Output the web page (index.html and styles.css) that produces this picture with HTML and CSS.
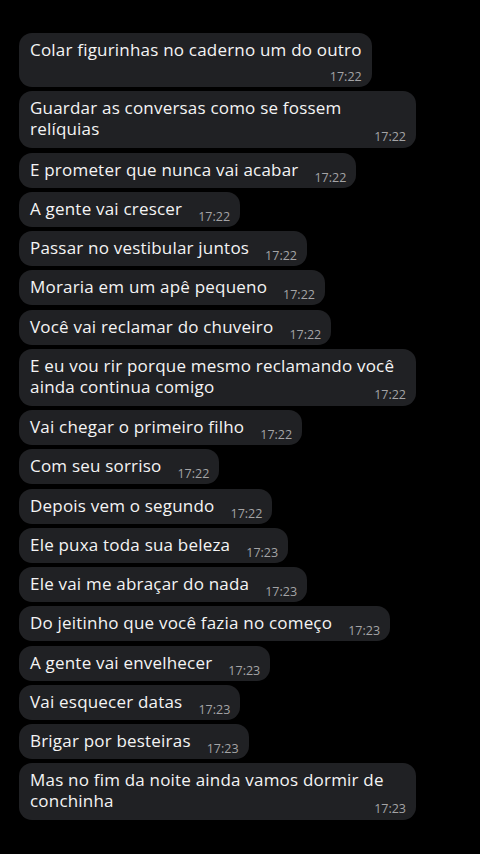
FILE: index.html
```html
<!DOCTYPE html>
<html lang="pt-BR">
<head>
  <meta charset="UTF-8">
  <meta name="viewport" content="width=device-width, initial-scale=1.0">
  <link rel="stylesheet" href="styles.css">
  <title>Conversa</title>
</head>
<body>
  <div class="chat">
    <div class="bubble stacked">Colar figurinhas no caderno um do outro<span class="time">17:22</span></div>
    <div class="bubble long">Guardar as conversas como se fossem relíquias<span class="time">17:22</span></div>
    <div class="bubble">E prometer que nunca vai acabar<span class="time">17:22</span></div>
    <div class="bubble">A gente vai crescer<span class="time">17:22</span></div>
    <div class="bubble">Passar no vestibular juntos<span class="time">17:22</span></div>
    <div class="bubble">Moraria em um apê pequeno<span class="time">17:22</span></div>
    <div class="bubble">Você vai reclamar do chuveiro<span class="time">17:22</span></div>
    <div class="bubble long">E eu vou rir porque mesmo reclamando você ainda continua comigo<span class="time">17:22</span></div>
    <div class="bubble">Vai chegar o primeiro filho<span class="time">17:22</span></div>
    <div class="bubble">Com seu sorriso<span class="time">17:22</span></div>
    <div class="bubble">Depois vem o segundo<span class="time">17:22</span></div>
    <div class="bubble">Ele puxa toda sua beleza<span class="time">17:23</span></div>
    <div class="bubble">Ele vai me abraçar do nada<span class="time">17:23</span></div>
    <div class="bubble">Do jeitinho que você fazia no começo<span class="time">17:23</span></div>
    <div class="bubble">A gente vai envelhecer<span class="time">17:23</span></div>
    <div class="bubble">Vai esquecer datas<span class="time">17:23</span></div>
    <div class="bubble">Brigar por besteiras<span class="time">17:23</span></div>
    <div class="bubble long">Mas no fim da noite ainda vamos dormir de conchinha<span class="time">17:23</span></div>
  </div>
</body>
</html>
```

FILE: styles.css
```css
body {
  margin: 0;
  background-color: #000;
  font-family: 'Open Sans', sans-serif;
  color: #f4f4f4;
}

.chat {
  display: flex;
  flex-direction: column;
  align-items: flex-start;
  gap: 4.25px;
  padding: 33px 0 0 19px;
}

.bubble {
  display: flow-root;
  max-width: 376px;
  padding: 6px 10px 8px 11px;
  background-color: #202124;
  border-radius: 13px;
  font-size: 17px;
  line-height: 21px;
  letter-spacing: 0.2px;
}

.bubble.long {
  padding-bottom: 9px;
}

.time {
  float: right;
  margin: 12px 0 -5px 16px;
  font-size: 12.5px;
  line-height: 14px;
  letter-spacing: 0;
  color: #a4a4a6;
}

.bubble.stacked .time {
  float: none;
  display: block;
  text-align: right;
  margin: 10px 0 -5px;
}
```
